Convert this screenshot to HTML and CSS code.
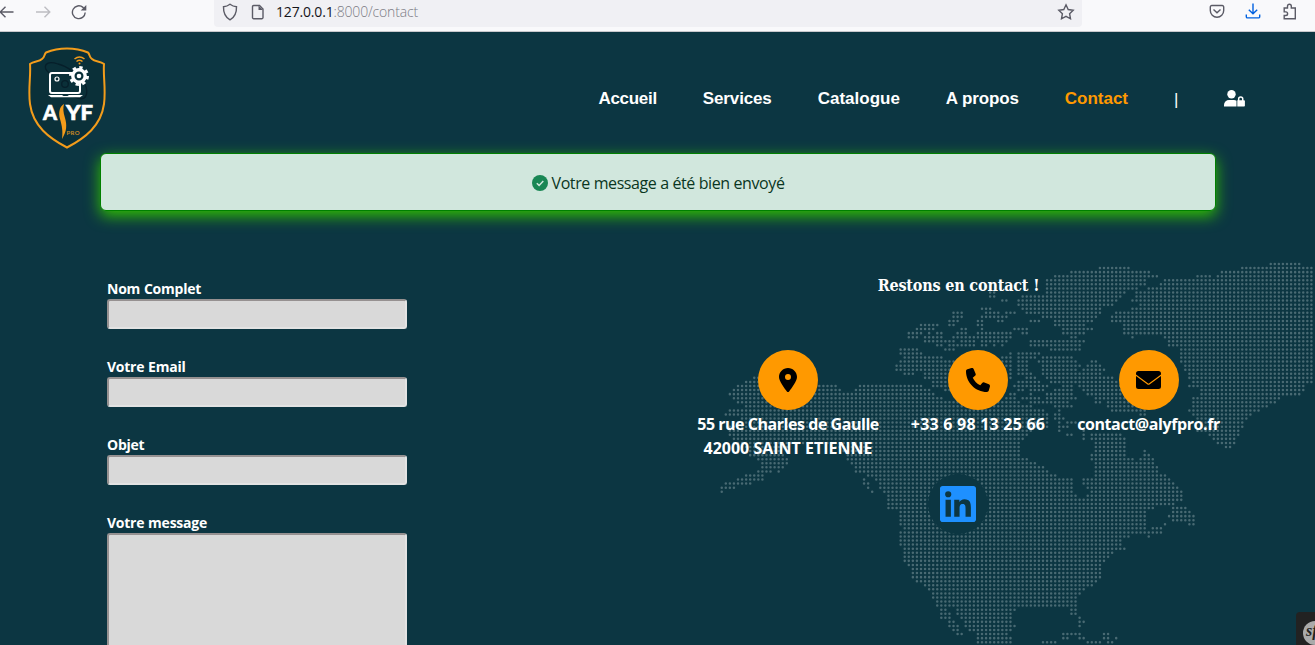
FILE: index.html
```html
<!DOCTYPE html>
<html lang="fr">
<head>
<meta charset="utf-8">
<title>Contact</title>
<link rel="stylesheet" href="styles.css">
</head>
<body>
<div class="toolbar">
  <div class="nav-buttons">
    <svg class="back" width="16" height="16" viewBox="0 0 16 16"><path d="M14.5 8H1M6.5 2.8 1.2 8l5.300 5.200"/></svg>
    <svg class="forward" width="16" height="16" viewBox="0 0 16 16"><path d="M1 8h13.500M9.500 2.800 14.800 8l-5.300 5.200"/></svg>
    <svg class="reload" width="16" height="16" viewBox="0 0 16 16"><path d="M14.200 8.500a6.400 6.400 0 1 1-2.200-5.100l1.500 1.700"/><path class="solid" d="M15.300 1v5.500H9.700z"/></svg>
  </div>
  <div class="address">
    <svg width="16" height="18" viewBox="0 0 16 18"><path d="M8 1.200c2 1.500 4 2.300 6.500 2.500C14.700 9.500 13 14 8 16.800 3 14 1.300 9.500 1.500 3.700 4 3.500 6 2.700 8 1.200z"/></svg>
    <svg width="14" height="16" viewBox="0 0 14 16"><path d="M2.700 1.500h5.800l3.500 3.500v8.500a1.200 1.200 0 0 1-1.200 1.200H2.700a1.200 1.200 0 0 1-1.200-1.200V2.700a1.200 1.200 0 0 1 1.200-1.200z"/><path class="solid" d="M7.500 1.500v4.500H12z"/></svg>
    <span class="url"><b>127.0.0.1</b>:8000/contact</span>
    <svg class="star" width="18" height="18" viewBox="0 0 18 18"><path d="m9 1.800 2.200 4.700 5 .7-3.600 3.500.9 5.100L9 13.400l-4.500 2.400.9-5.100-3.600-3.500 5-.7z"/></svg>
  </div>
  <div class="tools">
    <svg width="16" height="16" viewBox="0 0 16 16"><path d="M2.800 2.500h10.400a1.500 1.500 0 0 1 1.500 1.500v3.500a6.700 6.700 0 0 1-13.400 0V4a1.500 1.500 0 0 1 1.500-1.500zM4.500 6.500 8 9.800l3.500-3.300"/></svg>
    <svg class="download" width="16" height="16" viewBox="0 0 16 16"><path d="M8 .5v10M3.800 6.700 8 10.800l4.200-4.100M1.300 11.500v2.200a1.200 1.200 0 0 0 1.200 1.200h11a1.200 1.200 0 0 0 1.200-1.200v-2.200"/></svg>
    <svg width="16" height="18" viewBox="0 0 16 18"><path d="M3.200 5h3.300V3.200a1.900 1.900 0 0 1 3.800 0V5h4v10.700H3.200v-3.200h1.600a1.800 1.800 0 0 0 0-3.600H3.200z"/></svg>
  </div>
</div>

<div class="page">
  <svg class="map" id="map" width="635" height="395" viewBox="0 0 1905 1185"><path id="dots"/></svg>

  <header class="header">
    <svg class="logo" width="78" height="102" viewBox="0 0 78 102">
      <path class="shield" d="M39 1.500C47 1.500 54 3 60 5.500 62 7.500 61 10 64 12c3 3 8 2 12 5-1 12 2 25 0 40-3 22-19 34-37 43.500C21 91 5 79 2 57 0 42 3 29 2 17c4-3 9-2 12-5 3-2 2-4.500 4-6.500C24 3 31 1.500 39 1.500z"/>
      <path class="orbit" d="M22 27c-9-8-4-14 8-10 5 1 10 4 14 7M57 37c4 10 1 17-8 14-3-1-5-2-8-4"/>
      <rect class="screen" x="22" y="26" width="30" height="20" rx="2"/>
      <circle class="lens" cx="29" cy="32" r="2"/>
      <circle class="orbit" cx="37" cy="37" r="3.300"/>
      <path class="white" d="M20 48h14l1.500 1h4l1.500-1h14l-3 2.200H23z"/>
      <circle class="teeth" cx="51" cy="29" r="8.500"/>
      <circle class="gear" cx="51" cy="29" r="6.200"/>
      <circle class="white" cx="51" cy="29" r="2.300"/>
      <path class="wifi" d="M46.500 12q5-4 10 0M48.500 14.500q3-2.400 6 0"/><circle class="flame" cx="51.500" cy="16.600" r="1"/>
      <text class="brand" x="15" y="73">A</text><text class="brand" x="38" y="73" textLength="27" lengthAdjust="spacingAndGlyphs">YF</text>
      <path class="flame" d="M36 57c-4 2-6 8-4 15 2 7 3 12 2 20 5-8 5-14 3-21-2-6-2-10-1-14z"/>
      <text class="pro" x="38.500" y="88">PRO</text>
    </svg>
    <nav class="menu">
      <a class="tight">Accueil</a><a class="snug">Services</a><a>Catalogue</a><a class="snug">A propos</a><a class="active">Contact</a>
      <span class="bar">|</span>
      <svg class="user" width="21" height="17" viewBox="0 0 21 17"><circle cx="7.500" cy="4.200" r="4.200"/><path d="M0 16.500V15a5 5 0 0 1 5-5h5a5 5 0 0 1 2.500.8v5.700z"/><path d="M13.300 10.200h.6V9a2.800 2.800 0 0 1 5.600 0v1.200h.6a.8.800 0 0 1 .8.800v4.700a.8.800 0 0 1-.8.800h-6.800zM15.400 10.200H18V9a1.300 1.300 0 0 0-2.600 0z" fill-rule="evenodd"/></svg>
    </nav>
  </header>

  <div class="alert">
    <svg width="16" height="16" viewBox="0 0 16 16"><circle cx="8" cy="8" r="8"/><path d="m4.800 8.200 2.300 2.200 4.200-4.300"/></svg>
    <span>Votre message a été bien envoyé</span>
  </div>

  <main class="content">
    <form class="form">
      <label>Nom Complet</label><input type="text">
      <label>Votre Email</label><input type="text">
      <label>Objet</label><input type="text">
      <label>Votre message</label><textarea></textarea>
    </form>
    <section class="info">
      <h2>Restons en contact !</h2>
      <div class="cards">
        <div class="card">
          <span class="disc"><svg width="18" height="24" viewBox="0 0 384 512"><path d="M215.700 499.200C267 435 384 279.400 384 192 384 86 298 0 192 0S0 86 0 192c0 87.400 117 243 168.300 307.200 12.300 15.300 35.100 15.300 47.400 0zM192 128a64 64 0 1 1 0 128 64 64 0 1 1 0-128z"/></svg></span>
          <p class="street">55 rue Charles de Gaulle<br><span class="city">42000 SAINT ETIENNE</span></p>
        </div>
        <div class="card">
          <span class="disc"><svg width="24" height="24" viewBox="0 0 512 512"><path d="M164.900 24.600c-7.700-18.600-28-28.500-47.400-23.200l-88 24C12.100 30.200 0 46 0 64c0 247.400 200.600 448 448 448 18 0 33.800-12.100 38.600-29.500l24-88c5.300-19.400-4.600-39.700-23.200-47.400l-96-40c-16.300-6.800-35.200-2.100-46.300 11.600L304.700 368C234.300 334.700 177.300 277.700 144 207.300l49.300-40.300c13.700-11.200 18.400-30 11.600-46.300z"/></svg></span>
          <p class="phone">+33 6 98 13 25 66</p>
        </div>
        <div class="card">
          <span class="disc"><svg width="25" height="18" viewBox="0 0 25 18"><path d="M2.500 0h20A2.500 2.500 0 0 1 25 2.500v1L12.500 12.700 0 3.500v-1A2.500 2.500 0 0 1 2.500 0zM0 5l11.500 8.500q1 .7 2 0L25 5v10.500a2.500 2.500 0 0 1-2.500 2.500h-20A2.500 2.500 0 0 1 0 15.500z"/></svg></span>
          <p class="mail">contact@alyfpro.fr</p>
        </div>
      </div>
      <a class="linkedin"><svg width="36" height="36" viewBox="0 0 448 448"><path fill-rule="evenodd" d="M416 0H31.900C14.300 0 0 14.500 0 32.300v383.400C0 433.500 14.300 448 31.900 448H416c17.600 0 32-14.500 32-32.300V32.300C448 14.500 433.600 0 416 0zM135.400 384H69V170.200h66.500V384zM102.200 141a38.500 38.500 0 1 1 0-77 38.500 38.500 0 0 1 0 77zM384.300 384h-66.400V280c0-24.800-.5-56.700-34.500-56.700-34.600 0-39.900 27-39.900 54.900V384h-66.400V170.200h63.700v29.200h.9c8.900-16.800 30.600-34.500 62.900-34.500 67.200 0 79.700 44.300 79.700 101.900V384z"/></svg></a>
    </section>
  </main>
  <div class="debug"><svg width="24" height="24" viewBox="0 0 24 24"><circle cx="12" cy="12" r="12"/><text x="3" y="15">sf</text></svg></div>
</div>
<script src="map.js"></script>
</body>
</html>
```
FILE: styles.css
```css
* { box-sizing: border-box; }
body { margin: 0; height: 645px; overflow: hidden; background: #0c3642; font-family: "Open Sans", "Noto Sans", sans-serif; display: flex; flex-direction: column; }

.toolbar { height: 32px; flex: none; display: flex; background: #f9f9fb; border-bottom: 1px solid #c8c8cc; }
.toolbar svg { fill: none; stroke: #5b5b66; stroke-width: 1.4; flex: none; }
.toolbar .solid { fill: #5b5b66; stroke: none; }
.nav-buttons { width: 215px; display: flex; gap: 20px; padding-top: 4px; margin-left: -1px; }
.toolbar .forward { stroke: #bdbdc2; }
.address { width: 868px; height: 27px; background: #f0f0f4; border-radius: 0 0 4px 4px; display: flex; align-items: center; padding: 0 7px 4px 8px; }
.address svg + svg { margin-left: 13px; }
.url { margin-left: 11px; font-size: 14px; letter-spacing: -.17px; color: #7c7c84; font-weight: 300; }
.url b { font-weight: 400; color: #15141a; }
.address .star { margin-left: auto; }
.tools { display: flex; gap: 20px; padding: 3px 0 0 127px; }
.toolbar .download { stroke: #0061e0; }

.page { position: relative; flex: 1; overflow: hidden; }
.map { position: absolute; left: 680px; top: 218px; }
.map path { fill: none; stroke: #496a73; stroke-width: 7.600; stroke-linecap: round; }

.header { position: relative; height: 122px; padding: 15px 70px 0 28px; display: flex; justify-content: space-between; }
.shield { fill: #0a3039; stroke: #f39c1b; stroke-width: 2; }
.orbit { fill: none; stroke: #061f2a; stroke-width: 1.300; }
.screen { fill: #0a3039; stroke: #fff; stroke-width: 2; }
.lens { fill: none; stroke: #fff; stroke-width: 1.200; }
.white { fill: #fff; }
.teeth { fill: none; stroke: #fff; stroke-width: 3; stroke-dasharray: 3.300 3.376; }
.gear { fill: #0a3039; stroke: #fff; stroke-width: 3.400; }
.wifi { fill: none; stroke: #f39c1b; stroke-width: 1.600; }
.flame { fill: #f39c1b; }
.brand { font: 900 20px Lato, sans-serif; fill: #fff; stroke: #fff; stroke-width: .6; }
.pro { font: 700 6px Lato, sans-serif; fill: #c98724; letter-spacing: .4px; }

.menu { display: flex; align-items: center; height: 104px; font: 700 17px/24px "Liberation Sans", sans-serif; color: #fff; gap: 46px; }
.menu .tight { letter-spacing: -.3px; }
.menu .snug { letter-spacing: -.14px; }
.menu a.active { color: #ff9900; }
.menu .bar { font-weight: 400; margin-top: 2px; width: 4px; }
.user { fill: #fff; margin-top: -2px; }

.alert { position: relative; height: 58px; margin: -1px 99px 0 100px; background: #d1e7dd; border: 1px solid green; border-radius: 6px; box-shadow: 0 5px 15px #31c200; display: flex; align-items: center; justify-content: center; gap: 4px; font-size: 16px; letter-spacing: -.4px; color: #0a3622; padding-top: 2px; }
.alert svg { fill: #198754; }
.alert svg path { fill: none; stroke: #d1e7dd; stroke-width: 1.500; }

.content { position: relative; display: grid; grid-template-columns: 590px 523px; padding: 63px 0 0 107px; }
.form { width: 300px; display: flex; flex-direction: column; padding-top: 4px; }
.form label { font-size: 14px; font-weight: 700; line-height: 21px; letter-spacing: -.25px; word-spacing: .5px; color: #fff; }
.form input, .form textarea { width: 300px; height: 30px; margin: 0 0 27px; padding: 0; background: #d9d9d9; border: 2px solid; border-color: #969191 #e3e3e3 #e3e3e3 #969191; border-radius: 3px; resize: none; }
.form textarea { height: 180px; }
.info { display: flex; flex-direction: column; align-items: center; color: #fff; }
.info h2 { margin: 0; font: 700 16px/24px "DejaVu Serif Condensed", "DejaVu Serif", serif; letter-spacing: -.18px; }
.cards { width: 523px; display: grid; grid-template-columns: 182px 134px 143px; justify-content: space-between; margin-top: 52px; }
.card { display: flex; flex-direction: column; align-items: center; }
.disc { width: 60px; height: 60px; border-radius: 50%; background: #ff9900; display: flex; align-items: center; justify-content: center; }
.card p { margin: 2px 0 0; font-size: 16px; line-height: 24px; font-weight: 700; text-align: center; white-space: nowrap; letter-spacing: -.46px; }
.card .city { letter-spacing: 0; }
.card p.phone { letter-spacing: .22px; }
.card p.mail { letter-spacing: -.4px; }
.linkedin { width: 60px; height: 60px; margin-top: 14px; margin-right: 1px; border-radius: 50%; background: #0c3642; display: flex; align-items: center; justify-content: center; fill: #1e90ff; }

.debug { position: absolute; right: 0; bottom: 0; width: 19px; height: 33px; background: #222; border-radius: 4px 0 0 0; padding: 9px 0 0 7px; overflow: hidden; }
.debug circle { fill: #aaa; }
.debug text { font: italic 700 16px "Liberation Serif", serif; fill: #222; }
```
FILE: map.js
```js
// Coastlines of the dotted world map, in map units (3 per pixel).
const land = [
  // Alaska, Canada, United States
  [[222,375],[205,388],[183,400],[168,412],[145,428],[157,440],[170,455],[190,465],[200,475],[155,478],[133,490],[133,498],[175,505],[150,520],[145,540],[150,560],[155,585],[200,600],[205,620],[232,628],[243,655],[215,668],[180,680],[155,692],[130,703],[113,722],[125,732],[150,718],[180,706],[240,698],[262,672],[290,655],[292,672],[325,643],[325,622],[300,605],[330,590],[370,580],[440,590],[490,605],[500,630],[515,645],[530,670],[553,672],[575,685],[598,695],[598,715],[612,727],[620,740],[620,778],[645,780],[660,795],[656,825],[668,838],[656,855],[656,890],[668,898],[668,935],[682,950],[695,970],[695,990],[708,1002],[728,1002],[743,1015],[755,1045],[768,1070],[780,1080],[780,1108],[800,1115],[803,1133],[820,1145],[845,1160],[850,1148],[830,1120],[815,1095],[800,1070],[815,1070],[845,1110],[860,1135],[890,1155],[890,1185],[1000,1185],[985,1145],[1008,1130],[998,1105],[1005,1078],[1095,1075],[1160,1068],[1170,1090],[1195,1110],[1195,1133],[1215,1118],[1195,1085],[1195,1050],[1200,1030],[1240,1008],[1265,985],[1265,948],[1300,910],[1340,900],[1325,880],[1325,862],[1395,855],[1400,880],[1415,858],[1450,845],[1462,820],[1405,838],[1400,775],[1470,772],[1512,752],[1508,722],[1480,692],[1440,665],[1425,625],[1395,595],[1375,630],[1340,622],[1335,572],[1240,572],[1240,590],[1230,620],[1245,650],[1245,678],[1208,680],[1208,700],[1228,730],[1205,750],[1183,730],[1180,688],[1130,680],[1095,650],[1055,630],[1020,620],[1020,585],[1040,565],[1045,545],[1100,535],[1110,495],[1080,475],[1000,450],[960,445],[900,460],[830,450],[790,448],[770,432],[720,405],[600,403],[535,405],[520,425],[500,428],[470,405],[400,402],[300,390]],
  // Banks and Victoria islands
  [[655,292],[705,292],[735,312],[775,318],[820,330],[900,360],[900,450],[812,430],[795,422],[755,410],[752,390],[732,385],[725,362],[705,362],[700,375],[670,375],[645,360],[645,340],[668,330]],
  // Ellesmere island
  [[1290,48],[1328,50],[1400,62],[1440,78],[1395,86],[1395,106],[1335,128],[1320,146],[1290,170],[1260,178],[1265,194],[1225,220],[1205,232],[1120,230],[1115,205],[1030,192],[1030,178],[1010,165],[1020,135],[1090,128],[1090,90],[1140,72],[1195,62]],
  // Greenland
  [[1455,85],[1535,85],[1560,72],[1582,74],[1610,85],[1620,62],[1710,50],[1800,36],[1840,36],[1880,48],[1905,55],[1905,405],[1875,408],[1875,422],[1850,438],[1820,438],[1790,455],[1760,475],[1730,485],[1700,510],[1680,550],[1665,580],[1645,598],[1605,582],[1580,555],[1550,545],[1560,525],[1535,500],[1525,480],[1535,460],[1530,445],[1560,435],[1560,415],[1525,412],[1535,395],[1515,365],[1500,325],[1500,300],[1465,288],[1450,260],[1375,252],[1360,265],[1330,250],[1318,232],[1325,218],[1295,215],[1295,198],[1305,184],[1365,174],[1380,160],[1355,152],[1360,130],[1395,120],[1430,105]],
  // Newfoundland
  [[1475,768],[1518,768],[1530,785],[1545,798],[1545,828],[1524,828],[1520,815],[1480,815],[1464,800]]
];

// Islands, one entry per row of dots: y, then start and end of each run.
const rows = [
  [127,925,945],[139,925,945],[176,900,935],[188,815,850,910,965],[200,812,848,902,970],[213,803,835,890,907,950,972],
  [225,718,777,805,822,890,910],[237,705,768,842,862,902,910,1000,1048,1150,1240],[249,682,730,742,752,765,790,828,862,888,998,1020,1045,1150,1215],
  [261,682,715,730,790,812,897,905,995,1170,1192],[274,730,825,835,882,895,980,1048,1215],
  [286,765,790,800,885,900,925,935,950,965,975,1048,1210],[298,792,826,1105,1205],
  [310,985,995,1008,1082],[322,965,997,1008,1072,1085,1180],[335,960,997,1008,1048,1070,1080,1085,1192,1230,1252],
  [347,970,997,1008,1042,1085,1202,1220,1267],[359,980,997,1008,1048,1085,1192,1210,1282],[371,985,1000,1010,1057,1085,1272],
  [383,980,997,1033,1072,1098,1307],[395,1008,1082,1113,1152,1160,1315],[408,998,1057,1063,1102,1143,1178,1195,1330],
  [420,1008,1032,1048,1097,1120,1182,1208,1340],[432,985,1012,1048,1062,1098,1182,1218,1350],
  [444,978,1012,1023,1082,1098,1192,1243,1267,1270,1350],[457,1048,1102,1113,1172,1243,1267,1280,1370],
  [469,1120,1182,1273,1380],[481,1128,1142,1290,1400],[493,1118,1142,1375,1400],[505,1118,1152],[517,1128,1147,1153,1192],
  [530,1133,1172],[542,1128,1147,1203,1222],[554,1158,1177,1203,1222,1230,1332],[566,1205,1215,1230,1340],
  [152,960,985],[188,972,1008],[200,960,990],[213,1045,1080],
  [688,548,555],[700,548,570],[712,560,572],[724,572,582],
  [1152,1145,1200,1268,1292],[1164,1145,1168,1195,1215,1268,1290,1302,1314],[1176,1083,1130,1218,1262,1280,1300],
  [591,1635,1655]
];

const pitch = 12.2;
const inside = (x, y, ring) => {
  let hit = false;
  for (let i = 0, j = ring.length - 1; i < ring.length; j = i++) {
    const [xi, yi] = ring[i], [xj, yj] = ring[j];
    if ((yi > y) !== (yj > y) && x < (xj - xi) * (y - yi) / (yj - yi) + xi) hit = !hit;
  }
  return hit;
};
let d = "";
for (let y = 5.4; y < 1185; y += pitch) {
  for (let x = 3.2; x < 1905; x += pitch) {
    let on = land.some(ring => inside(x, y, ring));
    for (const [ry, ...runs] of rows) {
      if (Math.abs(ry - y) > pitch / 2) continue;
      for (let i = 0; i < runs.length; i += 2) if (x >= runs[i] && x <= runs[i + 1]) on = true;
    }
    if (on) d += `M${x.toFixed(1)} ${y.toFixed(1)}h0`;
  }
}
document.getElementById("dots").setAttribute("d", d);
```
